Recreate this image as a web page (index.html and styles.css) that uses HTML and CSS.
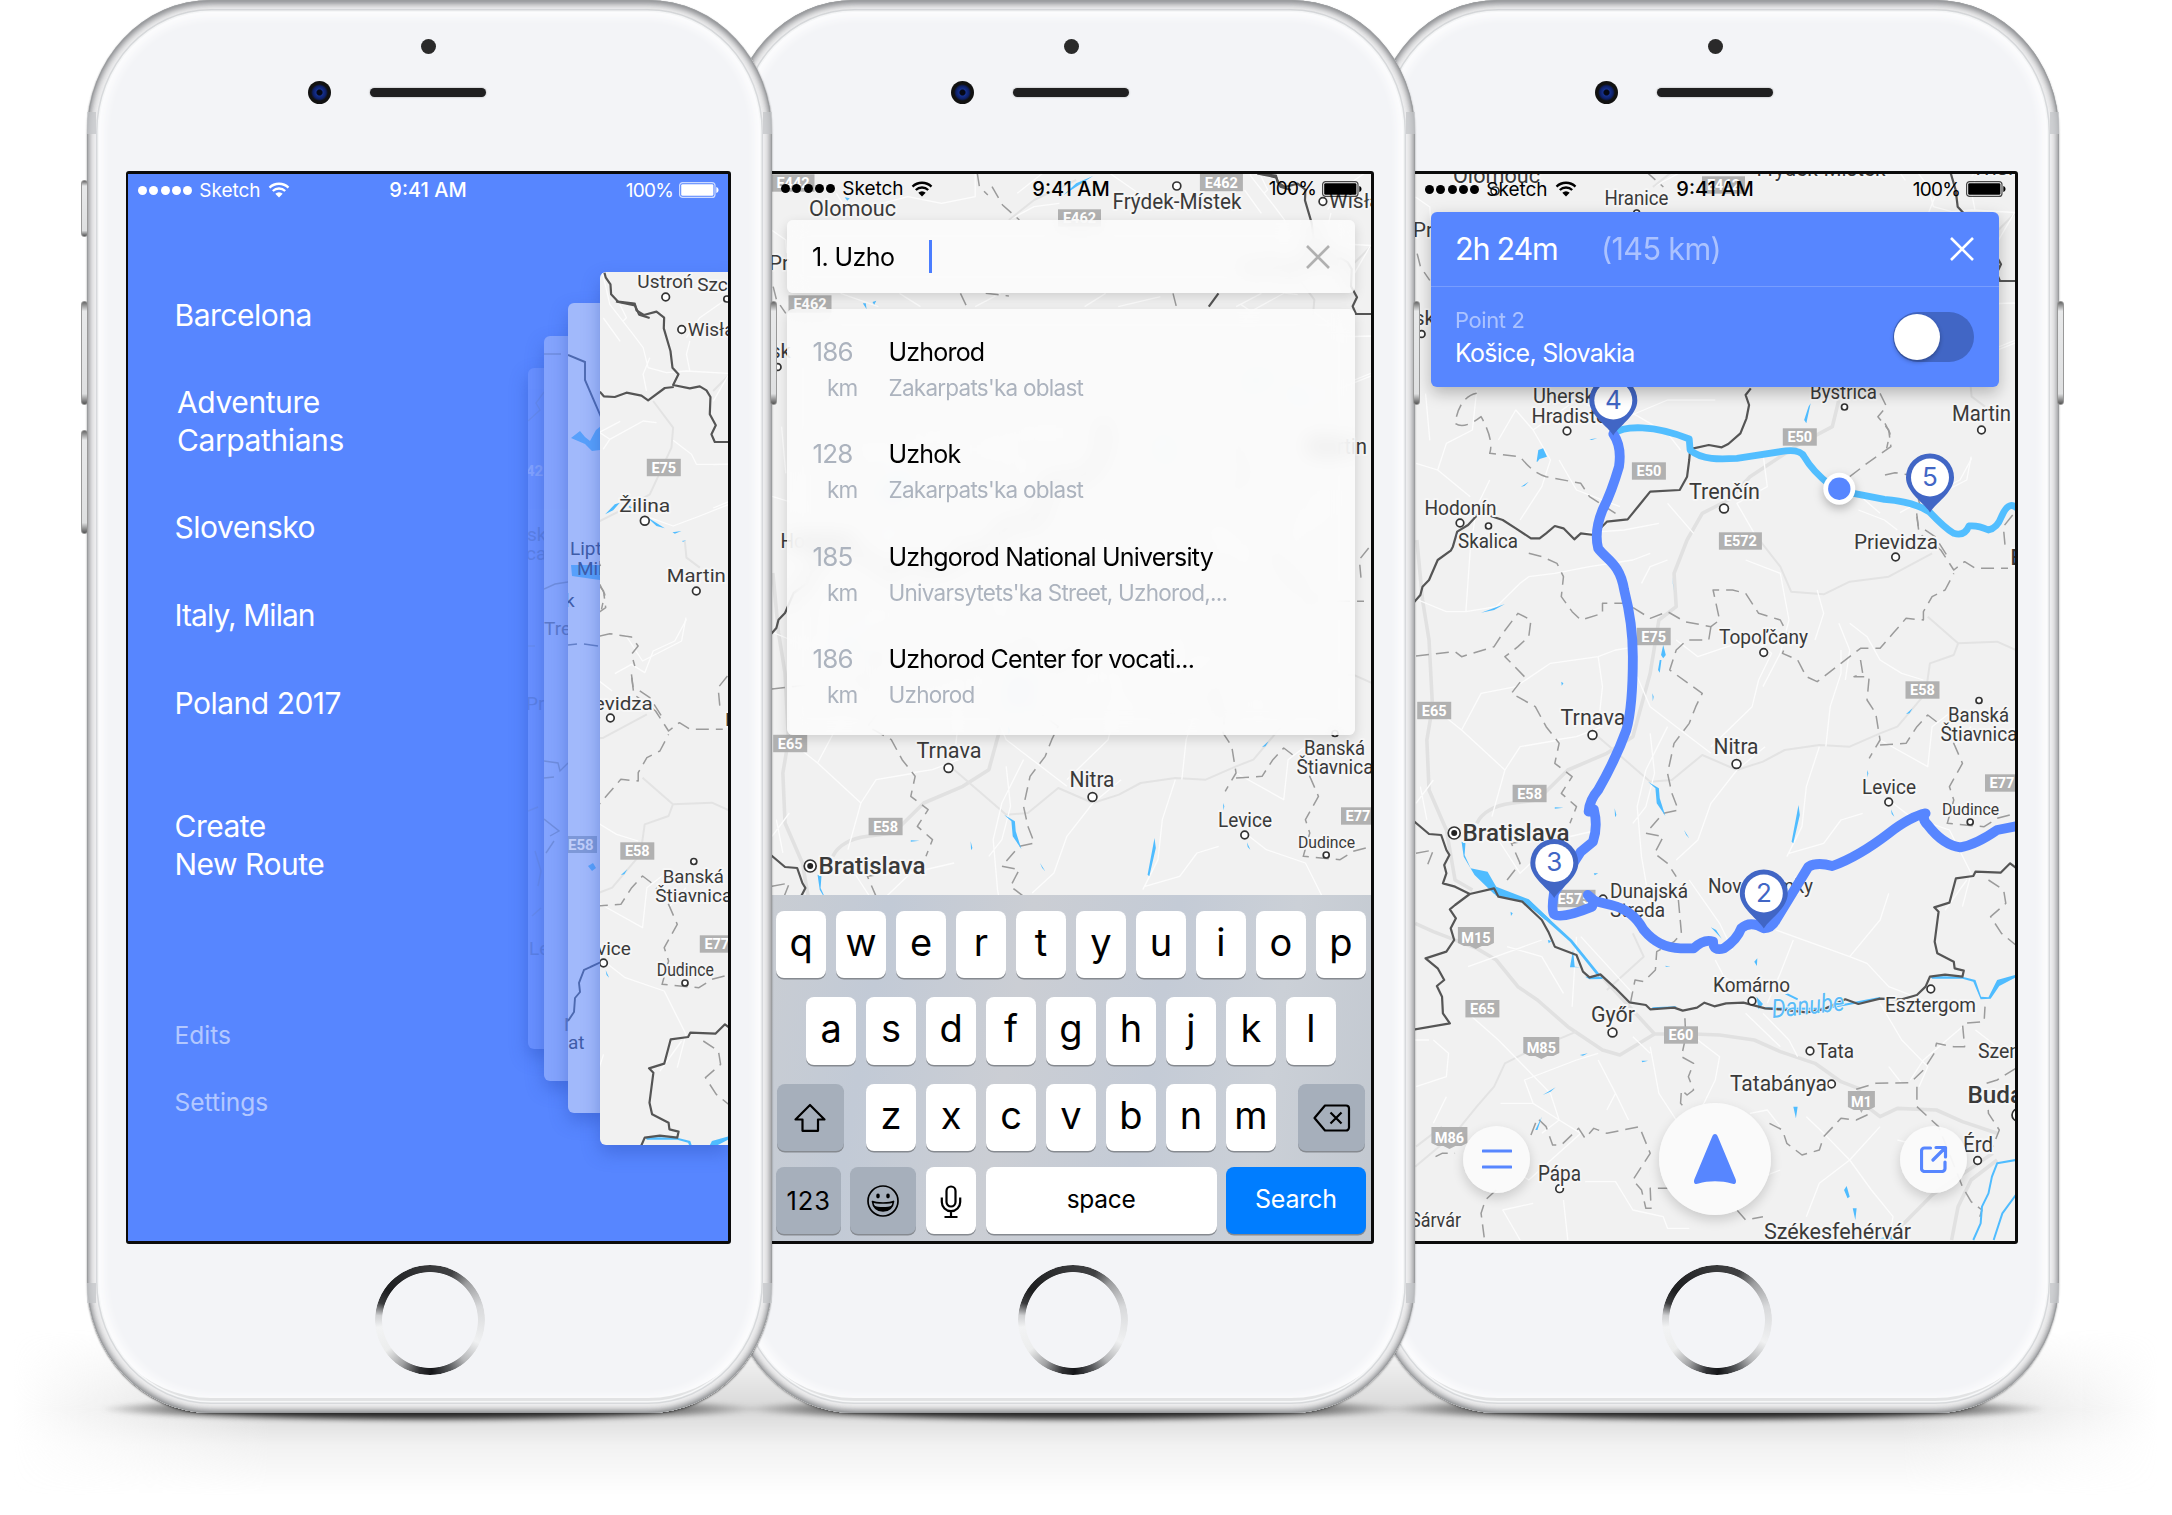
FILE: index.html
```html
<!DOCTYPE html>
<html lang="en">
<head>
<meta charset="utf-8">
<title>Route planner</title>
<link rel="stylesheet" href="styles.css">
</head>
<body>
<svg class="defs" aria-hidden="true">
  <defs>
    <symbol id="wifi" viewBox="0 0 22 16">
      <path d="M1.5 5.6a13.6 13.6 0 0 1 19 0M4.8 9a8.9 8.9 0 0 1 12.4 0" fill="none" stroke="currentColor" stroke-width="2.3"/>
      <path d="M11 15.6 7.3 11.7a5.3 5.3 0 0 1 7.4 0z" fill="currentColor"/>
    </symbol>
    <symbol id="battery" viewBox="0 0 40 16">
      <rect x=".6" y=".6" width="35.4" height="14.8" rx="3" fill="none" stroke="currentColor" stroke-width="1.2" opacity=".7"/>
      <rect x="2.2" y="2.2" width="32.2" height="11.6" rx="1.4" fill="currentColor"/>
      <path d="M37.3 5v6c1.6-.6 2.2-1.6 2.2-3s-.6-2.400-2.200-3z" fill="currentColor"/>
    </symbol>
    <g id="pin">
      <path d="M0 59C-5 50-24 39-24 24a24 24 0 0 1 48 0C24 39 5 50 0 59z" fill="#4166c5"/>
      <circle cy="24" r="19" fill="#fff"/>
    </g>
    <g id="terrain">
      <g transform="translate(-25 540) scale(.43367 .33333)">
        <path class="road-main" d="M62 0 75 180 90 300 98 500 85 600 90 750 130 870 150 1020 190 1050M200 850Q220 800 280 790L340 780 410 690 500 640 560 590 600 400 620 240 660 200 655 100 685 0 720-80 780-120 830-190 900-250 940-285 1020-340 1035-420"/>
        <path class="road-mid" d="M480 590 560 680 600 725 650 720 720 645 800 690 860 665 910 630 990 615 1060 620 1130 580 1170 560 1235 460 1245 370 1300 345 1310 310 1400 305 1443 330M840-20 900 80 925 155 1000 163 1060 125 1150 110 1250 40M1240 230 1310 310"/>
        <path class="road" d="M65 180 130 215 175 215 185 30 200-100 230-180M175 215 245 200 300 130 320 110 380 100 460 80 560 60 600 40M98 500 165 570 265 690 235 830M165 570 210 460 290 440 370 370 480 350 520 330 570 320M380 600 430 590 490 560M265 690 300 620 390 600M570 410 600 500 660 560 740 640M660 300 710 350 800 310 850 310 880 340 850 420 835 500 740 620M865 620 800 690 740 790 710 900 660 960M990 620 960 740 950 860 915 950M1005 620 1015 500 1040 400 1040 330M1060 250 1100 290 1130 360 1180 400 1230 420M1130 600 1240 680 1250 560 1290 520M1160 790 1200 830 1290 870 1340 1000 1320 1100M1090 820 1040 840 1000 910 920 940M600 580 610 700 590 800 560 850M640 560 590 690 570 800 580 950 600 1100M60 790 100 720M85 840 70 740M250 900 300 1000 380 900 480 870M1300 620 1340 560M480 350 490 440 480 560M820 60 900 100 920 240M920 240 900 340 860 440M640 60 600 80 580 130M985 150 1000 220 980 300M1035 250 1060 330 1050 420"/>
        <path class="road" d="M185-130 110-210 60-230M110-210 130-290 190-330 200-450M250-300 290-390 330-330 370-240 350-160 300-60M330-330 430-420 530-360 640-420 750-420M560-380 640-320 670-270M840-20 800-110 870-160 860-260M1200-200 1240-120 1330-180 1340-250M1080-90 1140-60 1170-30M430-20 540-30 620-50M640-110 700-20M1060-160 1130-80M390-240 430-150 530-100"/>
        <path class="region" d="M200-440Q160-430 150-350 170-330 210-370 240-300 230-260L300-250Q330-200 360-190L440-170 460-130 520-80M1130-440 1145-400 1125-370 1150-330 1155-280 1100-230 1060-190M1215-70 1220-20 1270 30 1300 90 1325 65 1350 85 1425 85M320 40 350 50 385 70 400 110 395 170 420 215 440 240 490 220 490 190 545 190 600 235 640 215 680 245 740 260 760 240 745 150 790 150 820 160 850 220 900 240 920 290 905 340 940 360 960 410 985 425 1060 350 1085 325 1130 325 1160 280 1190 235 1230 240 1230 215 1250 170 1280 150 1300 100M740 260 735 300 685 300 660 330 645 390 720 460 705 500 690 550 655 610 640 700 650 760 665 810 630 820 590 880 630 890 610 940 640 970 660 1010M60 348 150 335 165 350 240 320 260 280 295 220 325 240 320 290 295 320 265 350 310 410 280 460 335 500 360 560 390 610 380 670 420 710 395 760 430 800 415 850M1085 360 1090 400 1070 410 1105 410 1100 480 1120 520 1130 600 1105 655M1130 615 1190 610 1215 560 1240 525 1265 550 1300 610 1320 670 1290 740 1300 780 1285 850 1370 860 1400 835 1443 820M60 940 100 930 85 980M270 1020 300 970 280 910 330 900"/>
        <path class="water" d="M595 725 620 745 622 775 635 828 615 790 612 745zM625 345 630 315 636 345 630 355zM622 360 626 360 622 398 618 390zM605 460 608 470 606 484zM650 110 656 160 652 130zM210 218 265 192 240 210zM942 795 945 825 930 910 926 905zM1100 690 1103 700 1101 712zM1155 808 1163 830 1157 822zM678 870 690 895 683 885zM1190 522 1205 505 1198 520zM518 805 522 825 519 832zM380 802 400 803 380 806zM165 905 174 910 172 945 186 985 225 995 245 1040 320 1078 370 1140 358 1140 305 1080 240 1062 195 1005 170 950z"/>
        <path class="water" d="M338-235 342-270 353-275 362-250 345-243 340-235zM302-160 320-175 310-162zM395 425 400 430 396 437zM470 1000 480 1000 472 1006zM955-360 965-400 970-410 960-350zM460-302 478-305 465-300z"/>
      </g>
      <g transform="translate(-25 880) scale(.43367 .33333)">
        <path class="road-main" d="M58 130 100 155 200 205 245 240 295 320 340 360 410 440 490 510 530 525 610 462 700 462 760 465 840 480 900 515 980 550 1040 605 1080 625 1090 670 1130 710 1170 685 1260 690 1320 725 1400 760M485 285 610 462M1400 840 1340 900 1310 980 1295 1080M1390 820 1250 945 1170 1050"/>
        <path class="road-mid" d="M58 860 150 760 200 680 240 620 265 550 310 520 430 455M60 800 120 740M560 160 585 230 500 330"/>
        <path class="road" d="M100 480 135 520 130 590 60 620M180 400 250 480 370 640 390 720 350 760M255 670 330 670 390 720 440 760M330 670 310 600 430 540 480 520M600 520 560 470M480 540 520 640 550 720M520 640 500 690M700 470 760 530 750 600 720 680M600 500 620 640 660 720M820 400 900 500M860 400 920 480 940 530M1130 370 1180 480 1240 560 1220 620M1200 600 1230 540 1320 440M890 150 1060 230 1100 250 1150 320 1230 360M1060 230 1130 120 1150 40M930 180 900 280 870 370M690 0 760 130 790 210M750 240 770 290 840 350M430 170 420 380M560 340 440 170M270 200 350 230 400 340M130 650 100 730M960 710 1000 760 1060 840 990 910 960 1010M1060 840 1110 930 1160 1010 1150 1080M1060 840 1130 740M1170 780 1230 800M450 905 520 905 560 990 630 1010 640 1045 690 1045M300 1080 260 990 330 970M400 960 410 1080M250 840 320 900 440 760M830 700 870 690 900 740M840 900 900 870M58 480 90 480M1330 0 1280 90M1350 450 1400 500M180 260 350 180M1150 560 1180 610"/>
        <path class="region" d="M665 60 672 160 655 185 615 215 612 270 585 305 565 300 555 365M680 415 682 470 672 530 700 550 688 590 700 630 685 645 672 630 670 670 685 690M325 765 340 715 360 740 375 795 395 795 435 745 450 775 470 745 500 760 575 740 600 820 580 860 560 900 580 930 590 985 602 985 600 925 640 925M245 930 220 960 210 1000 218 1080M875 730 905 750 915 790 950 825 990 810 1000 770 1040 715 1075 720 1100 705 1110 720M1075 628 1120 610 1200 608 1230 570 1255 520 1260 490 1300 500 1325 500 1320 430 1370 425 1372 380M1215 620 1215 680 1265 740 1320 920 1340 965 1365 990 1360 1010M1380 0 1415 30 1420 70 1385 110 1410 160 1443 195M1443 565 1400 600 1375 610 1380 700 1405 750 1390 800M800 990 820 1020 860 1010M105 830 120 820 150 820"/>
        <path class="water" d="M225 0 250 40 320 60 420 180 485 285 480 290 415 185 340 98 300 62 245 48 215 0zM1245 288 1320 290 1350 300 1363 350 1380 352 1400 300 1443 284 1443 292 1405 318 1385 356 1362 358 1345 305 1320 296 1250 296zM840 245 847 235 846 258zM845 350 860 372 850 388zM930 680 940 680 936 715zM1047 930 1053 918 1060 950 1055 955zM1067 985 1076 985 1073 1020zM352 645 382 622 370 635zM335 750 350 710 340 750zM580 542 595 542 582 547zM438 525 456 520 445 527zM278 95 283 100 279 108zM364 180 372 183 366 190zM422 210 426 260 440 262 415 262zM450 290 490 290 490 297 460 298zM635 257 647 260 636 260zM740 142 765 176 752 150zM1130 1075 1160 1065 1190 1050 1165 1080z"/>
        <path class="river" d="M1443 840 1400 850 1388 890 1380 940 1365 980 1362 1030 1345 1080M1443 945 1412 1000 1392 1080M865 385 1000 386 1130 354M605 385 660 382M912 340 940 358"/>
      </g>
      <g transform="translate(370 80) scale(.33333)">
        <path class="road" d="M360 190 380 230 370 240M300 60 330 190 400 280 430 320 445 380 500 395 560 390 700 398M440 450 430 400 450 350M570 390 560 340 570 300M560 290 600 230 700 160M300 575 330 595 310 625M330 595 430 540 470 545M520 598 575 640 590 670 700 670M450 830 520 855 600 825 700 785M345 1298 395 1270 435 1295 460 1230 525 1200 560 1135"/>
        <path class="road-mid" d="M640 450 700 390M460 480 520 560 515 620 450 760 380 800 300 840M555 900 560 950 600 980"/>
        <path class="water" d="M316 820 345 790 360 785 340 808zM380 788 398 800 392 804zM438 826 495 862 470 855zM518 874 545 870 525 878zM546 900 560 898 550 902z"/>
        <path class="region" d="M300 1030 315 1060 305 1105M300 1185 330 1178 395 1188 415 1215 395 1240 405 1275M395 1300 400 1340M420 1350 450 1370 485 1425M683 1305 655 1340 660 1395"/>
        <path class="border" d="M314 95 318 110 332 130 334 160 355 182 405 188 410 208 432 222 470 212 493 230 492 262 512 330 518 380 536 400 520 432 570 442 600 436 620 448 632 468 630 520 648 553 635 580 645 603 700 603M300 452 312 466 345 468 380 455 425 464 445 478 495 441 522 438"/>
      </g>
      <g transform="translate(-31.500 107) scale(.42088 .33333)">
        <path class="road" d="M76 270 110 300 112 340M230 160 250 200 330 230M340 190 400 170 480 190 560 170 560 100M640 240 700 200 760 190M720 100 660 160M880 100 960 170M1200 150 1240 220M240 460 330 500M380 460 430 500M820 500 870 460M1180 500 1240 460M1000 470 900 500M100 860 110 1000M1461 400 1500 315M1461 720 1500 700M1461 590 1500 588M560 500 620 460"/>
        <path class="road-mid" d="M640 240 700 180 800 120"/>
        <path class="region" d="M565 100 570 140 590 165M600 140 625 195 665 240M525 460 540 500M585 460 640 468M1030 460 1040 510M80 440 88 480 110 520"/>
        <path class="water" d="M770 165 840 108 800 130zM250 172 262 175 256 182zM293 490 300 490 302 508zM316 486 325 482 320 494z"/>
        <path class="border" d="M1230 100 1275 112 1285 140 1310 150M1138 460 1115 500"/>
      </g>
      <g transform="translate(-25 540) scale(.43367 .33333)">
        <path class="border" d="M832-455 820-435 828-405 822-365 808-320 780-288 765-278 735-285 700-275 692-270 690-240 685-190 668-150 600-145 575-105 548-62 500-55 470-15 440-20 425-2 400-35 380-42 360-20 345-5 325-5 290-35 260-60 225-75 205-80 180-45 155-25 145 20 140 32 110 60 90 120 75 140 70 165 50 195M50 838 90 882 118 885 130 930 137 945 125 975 130 1000 122 1030 150 1040 184 1062 150 1095 138 1108 152 1135 140 1165 148 1200 130 1235 82 1255 110 1285 125 1320 108 1338 120 1370 122 1420 138 1450 50 1470M184 1062 240 1045 250 1070 305 1085 350 1140 365 1175 380 1220 430 1245 445 1295 460 1312 485 1303 520 1345 552 1387 590 1395 600 1408 655 1403 675 1412 708 1403 725 1388 748 1399 775 1390 815 1388 865 1405 900 1408 960 1417 1000 1408 1050 1378 1080 1392 1130 1376 1180 1378 1215 1365 1235 1340 1245 1310 1280 1304 1320 1310 1323 1292 1302 1285 1300 1265 1262 1240 1256 1205 1265 1115 1255 1102 1290 1088 1305 1015 1345 1008 1350 995 1408 998 1430 970 1450 990"/>
      </g>
    </g>
  </defs>
</svg>

<main class="stage">
  <section class="phone phone-menu">
    <i class="side left mute"></i><i class="side left up"></i><i class="side left down"></i><i class="side right"></i>
    <header class="bezel"><i class="sensor"></i><div class="ear"><i class="camera"></i><i class="speaker"></i></div></header>
    <div class="screen blue">
      <div class="status light">
        <span class="carrier"><span class="dots"><i></i><i></i><i></i><i></i><i></i></span>Sketch<svg class="wifi"><use href="#wifi"/></svg></span>
        <b>9:41 AM</b>
        <span class="power">100%<svg class="batt"><use href="#battery"/></svg></span>
      </div>
      <div class="menu-body">
        <nav class="routes">
          <a>Barcelona</a>
          <a class="inset">Adventure<br>Carpathians</a>
          <a>Slovensko</a>
          <a class="tight">Italy, Milan</a>
          <a>Poland 2017</a>
          <a class="create">Create<br>New Route</a>
          <a class="minor">Edits</a>
          <a class="minor">Settings</a>
        </nav>
        <div class="deck">
          <div class="card c4"><svg viewBox="528 367 16 681">
            <path class="ghost" d="M528 420 540 409 536 402 544 391M528 645h7M528 810l10-4M535 850l6 20-3 15M532 915l9-8"/>
            <text x="526" y="475" class="gb">42</text><text x="527" y="540">ska</text><text x="526" y="559">ca</text><text x="526" y="709">Pri</text><text x="529" y="954">Le</text>
          </svg></div>
          <div class="card c3"><svg viewBox="544 335 24 745">
            <path class="ghost" d="M544 353h17M544 588 555 583 568 581M544 760 558 762 560 770 568 762M544 818 559 830 550 835M546 852 554 840M544 777 554 776"/>
            <text x="544" y="634">Tre</text><text x="564" y="1030">N</text>
          </svg></div>
          <div class="card c2"><svg viewBox="568 303 32 810">
            <path class="ghost dark" d="M568 355 585 362V380L601 417M568 1021 574 1012 575 998 580 992 579 983 584 970 601 962"/>
            <path class="ghost" d="M568 645 577 644M584 644 598 646"/>
            <path fill="#57a0fb" d="M571 438 580 431 585 437 590 441 596 430 601 426V450L592 451 585 444zM571 565h29v15l-28-4zM588 866l5-3 3 5-4 3z"/>
            <rect x="566" y="836" width="31" height="17" fill="#7d98d8"/>
            <text x="568" y="850" class="gb">E58</text><text x="570" y="555">Lipto</text><text x="577" y="575">Mik</text><text x="565" y="607">k</text><text x="568" y="1049">at</text>
          </svg></div>
          <div class="card c1"><svg class="map" data-screen="1" viewBox="470.200 111 128 873"><use href="#terrain"/></svg></div>
        </div>
      </div>
    </div>
    <footer class="chin"><i class="home"></i></footer>
  </section>

  <section class="phone phone-search">
    <i class="side left mute"></i><i class="side left up"></i><i class="side left down"></i><i class="side right"></i>
    <header class="bezel"><i class="sensor"></i><div class="ear"><i class="camera"></i><i class="speaker"></i></div></header>
    <div class="screen">
      <svg class="map backdrop" data-screen="2" viewBox="0 141 600 1067"><use href="#terrain"/></svg>
      <div class="overlay">
        <div class="status">
          <span class="carrier"><span class="dots"><i></i><i></i><i></i><i></i><i></i></span>Sketch<svg class="wifi"><use href="#wifi"/></svg></span>
          <b>9:41 AM</b>
          <span class="power">100%<svg class="batt"><use href="#battery"/></svg></span>
        </div>
        <div class="field"><span>1. Uzho</span><i class="caret"></i><svg class="close" viewBox="0 0 24 24"><path d="M1 1 23 23M23 1 1 23"/></svg></div>
        <ul class="results">
          <li><div class="dist"><b>186</b><small>km</small></div><div><b>Uzhorod</b><small>Zakarpats'ka oblast</small></div></li>
          <li><div class="dist"><b>128</b><small>km</small></div><div><b>Uzhok</b><small>Zakarpats'ka oblast</small></div></li>
          <li><div class="dist"><b>185</b><small>km</small></div><div><b>Uzhgorod National University</b><small>Univarsytets'ka Street, Uzhorod,...</small></div></li>
          <li><div class="dist"><b>186</b><small>km</small></div><div><b>Uzhorod Center for vocati...</b><small>Uzhorod</small></div></li>
        </ul>
        <div class="keyboard">
          <div class="keys"><i>q</i><i>w</i><i>e</i><i>r</i><i>t</i><i>y</i><i>u</i><i>i</i><i>o</i><i>p</i></div>
          <div class="keys"><i>a</i><i>s</i><i>d</i><i>f</i><i>g</i><i>h</i><i>j</i><i>k</i><i>l</i></div>
          <div class="keys third">
            <i class="fn shift"><svg width="34" height="30" viewBox="0 0 34 30"><path d="M17 2 31.500 16.500H25V27.800H9.500V16.500H2.500z"/></svg></i>
            <i>z</i><i>x</i><i>c</i><i>v</i><i>b</i><i>n</i><i>m</i>
            <i class="fn back"><svg width="38" height="28" viewBox="0 0 38 28"><path d="M12 1.500H33a3 3 0 0 1 3 3V23.500a3 3 0 0 1-3 3H12L1.500 14zM17.500 8.500 28.500 19.500M28.500 8.500 17.500 19.500"/></svg></i>
          </div>
          <div class="keys bottom">
            <i class="fn num">123</i>
            <i class="fn emoji"><svg width="34" height="34" viewBox="0 0 34 34"><circle cx="17" cy="17" r="15"/><ellipse class="ink" cx="12" cy="12" rx="1.800" ry="2.400"/><ellipse class="ink" cx="22" cy="12" rx="1.800" ry="2.400"/><path d="M6.500 17.500C10 19.500 24 19.500 27.500 17.500 27 23 23 27 17 27S7 23 6.500 17.500z"/><path class="ink" d="M8 21.500C12 23.500 22 23.500 26 21.500 24.500 25.500 21 27 17 27S9.500 25.500 8 21.500z"/></svg></i>
            <i class="mic"><svg width="22" height="34" viewBox="0 0 22 34"><rect x="6.500" y="1.500" width="9" height="20" rx="4.500"/><path d="M1.800 12.500V17a9.200 9.200 0 0 0 18.400 0V12.500M11 26V32M4.500 32H17.500"/></svg></i>
            <i class="space">space</i><i class="go">Search</i>
          </div>
        </div>
      </div>
    </div>
    <footer class="chin"><i class="home"></i></footer>
  </section>

  <section class="phone phone-route">
    <i class="side left mute"></i><i class="side left up"></i><i class="side left down"></i><i class="side right"></i>
    <header class="bezel"><i class="sensor"></i><div class="ear"><i class="camera"></i><i class="speaker"></i></div></header>
    <div class="screen">
      <svg class="map backdrop" data-screen="3" viewBox="0 174 600 1067">
        <use href="#terrain"/>
        <g class="top-layer">
          <g transform="translate(-25 540) scale(.43367 .33333)">
            <path class="leg next" d="M515-318C540-345 610-345 690-303L692-270C720-240 760-242 800-245L900-265Q945-275 955-250 975-205 1015-165L1036-154 1060-142 1140-122Q1210-115 1245-83 1280-35 1300-20 1325-10 1335-42 1355-45 1380-30 1400-35 1410-70 1428-125 1450-90"/>
            <path class="leg" d="M515-318Q535-280 528-220 510-140 490-90 470-25 480 25C500 60 530 70 540 150Q560 250 560 350 560 500 545 570 520 660 480 750 460 780 458 815L470 808Q480 860 468 905L440 935 378 1060Q372 1110 378 1122 392 1140 466 1100L470 1085 456 1065 472 1083 510 1095Q560 1110 585 1170 620 1225 670 1225L700 1225Q725 1195 745 1205 745 1235 770 1225 800 1200 810 1165 830 1140 862 1165 880 1165 890 1140L965 980Q985 965 1020 978 1080 950 1150 880 1200 830 1235 820 1225 835 1240 855 1275 915 1315 922 1350 915 1400 870L1450 857"/>
          </g>
          <g class="here"><circle cx="424.300" cy="488.700" r="16" fill="#fff"/><circle cx="424.300" cy="488.700" r="11.200" fill="#5786ff"/></g>
          <g class="pins">
            <g transform="translate(198.300 376.500)"><use href="#pin"/><text y="32">4</text></g>
            <g transform="translate(515 453.500)"><use href="#pin"/><text y="32">5</text></g>
            <g transform="translate(139.300 839)"><use href="#pin"/><text y="32">3</text></g>
            <g transform="translate(348.800 869.500)"><use href="#pin"/><text y="32">2</text></g>
          </g>
        </g>
      </svg>
      <div class="overlay">
        <div class="status">
          <span class="carrier"><span class="dots"><i></i><i></i><i></i><i></i><i></i></span>Sketch<svg class="wifi"><use href="#wifi"/></svg></span>
          <b>9:41 AM</b>
          <span class="power">100%<svg class="batt"><use href="#battery"/></svg></span>
        </div>
        <div class="trip">
          <div class="trip-head"><b>2h 24m</b><span>(145 km)</span><svg class="close" viewBox="0 0 24 24"><path d="M1 1 23 23M23 1 1 23"/></svg></div>
          <div class="trip-point"><p><small>Point 2</small>Košice, Slovakia</p><span class="toggle"><i></i></span></div>
        </div>
        <div class="actions">
          <span class="round"><svg width="30" height="20" viewBox="0 0 30 20"><path d="M1 2H29M1 18H29"/></svg></span>
          <span class="round big"><svg width="44" height="52" viewBox="0 0 44 52"><path class="arrow" d="M22 1C20.500 1 19.800 2 19 4L1.500 46C0 50 2 52 5.500 50.500 15 47.500 29 47.500 38.500 50.500 42 52 44 50 42.500 46L25 4C24.200 2 23.500 1 22 1z"/></svg></span>
          <span class="round"><svg width="28" height="28" viewBox="0 0 28 28"><path d="M10.500 3H4.500a3 3 0 0 0-3 3V23.500a3 3 0 0 0 3 3H22a3 3 0 0 0 3-3V17M16 2.500H25.500V12M25 3 13 15"/></svg></span>
        </div>
      </div>
    </div>
    <footer class="chin"><i class="home"></i></footer>
  </section>
</main>
<script src="map.js"></script>
</body>
</html>
```
FILE: map.js
```js
const NS = 'http://www.w3.org/2000/svg';

// screens, x, baseline, font size, width, name, options
const towns = [
  ['1', 507.5, 127, 20, 56, 'Ustroń'],
  ['1', 567.5, 130, 18, 0, 'Szczyrk'],
  ['123', 558, 175, 19.5, 0, 'Wisła'],
  ['1', 489.5, 350.7, 20.5, 51, 'Žilina'],
  ['23', 38, 182.5, 20, 87, 'Olomouc'],
  ['23', 341.5, 176, 20, 129, 'Frýdek-Místek'],
  ['3', 189.5, 205, 19, 64, 'Hranice'],
  ['23', -2, 236.7, 19, 0, 'Pr'],
  ['23', -1, 325, 19, 0, 'sk'],
  ['3', 118, 403, 18.5, 0, 'Uherské'],
  ['3', 116.5, 422.7, 18.5, 0, 'Hradiste'],
  ['3', 395, 399, 18.5, 67, 'Bystrica'],
  ['123', 537, 421, 20, 59, 'Martin'],
  ['3', 274, 499, 20, 71, 'Trenčín'],
  ['23', 9.5, 515, 19, 72, 'Hodonín'],
  ['3', 43, 547.5, 18.5, 60, 'Skalica'],
  ['13', 439, 548.5, 19.5, 84, 'Prievidza'],
  ['3', 304, 644, 19, 89, 'Topoľčany'],
  ['23', 145.5, 725, 20.5, 65, 'Trnava'],
  ['23', 298.5, 753.7, 20.5, 45, 'Nitra'],
  ['123', 447, 794, 19, 54, 'Levice'],
  ['123', 533, 721.7, 19, 61, 'Banská'],
  ['123', 525.5, 741, 19, 77, 'Štiavnica'],
  ['123', 527, 815, 16, 57, 'Dudince'],
  ['23', 47.5, 840.7, 22, 107, 'Bratislava', 'strong'],
  ['3', 195, 897.7, 18.5, 78, 'Dunajská'],
  ['3', 195, 916.7, 18.5, 55, 'Streda'],
  ['3', 293, 893.3, 18.5, 105, 'Nové Zámky'],
  ['3', 298, 992, 18.5, 77, 'Komárno'],
  ['3', 470, 1011.7, 18.5, 91, 'Esztergom'],
  ['3', 176, 1022, 20.5, 44, 'Győr'],
  ['3', 402, 1058, 19, 37, 'Tata'],
  ['3', 315, 1090.7, 20, 97, 'Tatabánya'],
  ['3', 563, 1058, 18, 0, 'Szentendre'],
  ['3', 552.5, 1102.7, 22.5, 0, 'Budapest', 'strong'],
  ['3', 548, 1151.7, 20, 30, 'Érd'],
  ['3', 123, 1181, 20, 43, 'Pápa'],
  ['3', -5, 1227, 19, 51, 'Sárvár'],
  ['3', 349, 1239, 20, 147, 'Székesfehérvár'],
  ['13', 595.5, 565, 20, 0, 'B', 'strong'],
  ['3', 357.5, 1018, 24, 73, 'Danube', 'river-name'],
];

// screens, x, y, radius
const dots = [
  ['1', 535.9, 136, 3.8], ['1', 597, 138, 3], ['123', 551.9, 168.5, 3.8], ['1', 515, 359.7, 4.4],
  ['2', 405.8, 153, 4], ['3', 221.7, 213, 3], ['23', 6.600, 334, 3.4], ['3', 80, 191, 4], ['3', 152, 431, 3.8],
  ['3', 429.5, 407, 3], ['13', 566.5, 430, 3.8], ['3', 309, 508.5, 4.4], ['3', 45, 523, 3.8],
  ['3', 73.5, 526, 3], ['13', 480.600, 557, 3.8], ['3', 348.7, 652.5, 3.8], ['23', 177.5, 735, 4.4],
  ['23', 321.5, 764, 4.4], ['123', 473.7, 802, 3.8], ['123', 564, 700.5, 3], ['123', 555.2, 822, 3],
  ['3', 337, 1001, 3.8], ['3', 515.8, 989, 3.8], ['3', 197.5, 1032.5, 4.4], ['3', 395, 1051, 3.8],
  ['3', 416.5, 1084, 3.8], ['3', 562.600, 1160.5, 3.8], ['3', 144.600, 1188.7, 3.8], ['23', 39.2, 833, 6], ['3', 188, 899, 3.8], ['3', 603, 1115, 6],
];

// screens, centre x, centre y, text, motorway shield
const signs = [
  ['2', 22, 150, 'E442'], ['2', 450.4, 149.5, 'E462'], ['23', 308.5, 185, 'E462'], ['2', 39, 271, 'E462'],
  ['1', 534, 306.5, 'E75'], ['3', 384.8, 437, 'E50'], ['3', 233.9, 471, 'E50'], ['3', 325.4, 541, 'E572'],
  ['3', 238.7, 636.5, 'E75'], ['23', 19.2, 710.5, 'E65'], ['13', 507.5, 690, 'E58'], ['23', 114.600, 793.5, 'E58'],
  ['123', 587, 783, 'E77'], ['3', 159, 898.5, 'E575'], ['3', 266, 1035, 'E60'], ['3', 67.4, 1008.7, 'E65'],
  ['3', 60.9, 938, 'M15', 1], ['3', 126.3, 1048, 'M85', 1], ['3', 446.4, 1102, 'M1', 1], ['3', 34.4, 1138, 'M86', 1],
];

function add(parent, tag, attrs, text) {
  const el = document.createElementNS(NS, tag);
  for (const key in attrs) el.setAttribute(key, attrs[key]);
  if (text) el.textContent = text;
  parent.appendChild(el);
}

document.querySelectorAll('.map').forEach(map => {
  const on = row => row[0].includes(map.dataset.screen);
  const layer = document.createElementNS(NS, 'g');
  map.insertBefore(layer, map.querySelector('.top-layer'));

  signs.filter(on).forEach(([, x, y, name, shield]) => {
    const w = name.length * 9 + 7;
    if (shield) {
      add(layer, 'path', { class: 'sign', d: `M${x - w / 2 - 1} ${y - 11}h${w + 2}v16l-6 3h-6l-${w / 2 - 11} 3-${w / 2 - 11}-3h-6l-6-3z` });
    } else {
      add(layer, 'rect', { class: 'sign', x: x - w / 2, y: y - 8.700, width: w, height: 17.4 });
    }
    add(layer, 'text', { class: 'sign-text', x, y: y + 5 }, name);
  });
  dots.filter(on).forEach(([, x, y, r]) => {
    add(layer, 'circle', { class: 'dot', cx: x, cy: y, r });
    if (r > 5) add(layer, 'circle', { cx: x, cy: y, r: 3, fill: '#222' });
  });
  towns.filter(on).forEach(([, x, y, size, width, name, kind]) => {
    const attrs = { class: 'town ' + (kind || ''), x, y, 'font-size': size * 1.08 };
    if (width) {
      attrs.textLength = width;
      attrs.lengthAdjust = 'spacingAndGlyphs';
    }
    if (kind === 'river-name') attrs.transform = `rotate(-6 ${x} ${y})`;
    add(layer, 'text', attrs, name);
  });
});
```
FILE: styles.css
```css
* { box-sizing: border-box; }
body { margin: 0; background: #fff; font-family: Inter, "Liberation Sans", sans-serif; overflow: hidden; }
i { font-style: normal; display: block; }
small { display: block; font-size: inherit; }
.defs { position: absolute; width: 0; height: 0; }

.stage { display: flex; padding-left: 87px; height: 1515px; width: 2172px; isolation: isolate; }

/* handset */
.phone {
  position: relative; flex: none; width: 685px; height: 1413px;
  border-radius: 124px / 132px;
  background: #f3f4f7;
  box-shadow:
    inset 0 0 0 1px #9b9d9f,
    inset 0 5px 6px -1px rgba(110, 112, 116, .5),
    inset 0 -4px 5px -1px rgba(110, 112, 116, .4),
    inset 0 0 7px 2px rgba(100, 102, 106, .62),
    inset 0 0 0 9px #f0f0f1,
    inset 0 0 0 10.500px #d9dbdd,
    inset 0 0 0 12px #f6f7f8,
    inset 0 -15px 0 0 #e2e3e4,
    inset 0 0 9px 17px #fdfdfe,
    0 1px 2px rgba(40, 40, 40, .5);
}
.phone-menu { z-index: 3; }
.phone-search { z-index: 2; margin-left: -42px; }
.phone-route { z-index: 1; margin-left: -41px; }
.phone::before {
  content: ""; position: absolute; inset: 0; pointer-events: none;
  background:
    linear-gradient(#c4c6c9, #c4c6c9) 0 112px / 9px 22px,
    linear-gradient(#c4c6c9, #c4c6c9) 100% 112px / 9px 22px,
    linear-gradient(#c4c6c9, #c4c6c9) 0 1283px / 9px 20px,
    linear-gradient(#c4c6c9, #c4c6c9) 100% 1283px / 9px 20px;
  background-repeat: no-repeat; opacity: .75;
}
/* ground shadow */
.stage::before {
  content: ""; position: absolute; z-index: -1; left: 10px; top: 1330px; width: 2152px; height: 180px;
  background: linear-gradient(90deg, transparent, #d8d8d8 12%, #d8d8d8 88%, transparent);
  -webkit-mask: linear-gradient(transparent, #000 44%, rgba(0,0,0,.35) 64%, transparent 92%);
  mask: linear-gradient(transparent, #000 44%, rgba(0,0,0,.35) 64%, transparent 92%);
}
/* dark contact line under each handset */
.stage::after {
  content: ""; position: absolute; z-index: -1; left: 0; top: 1390px; width: 2172px; height: 36px;
  background:
    radial-gradient(330px 13px at 430px 19px, #222 0, #333 60%, transparent),
    radial-gradient(330px 13px at 1073px 19px, #222 0, #333 60%, transparent),
    radial-gradient(330px 13px at 1717px 19px, #222 0, #333 60%, transparent);
  filter: blur(2px);
}
.side { position: absolute; width: 7px; height: 104px; border-radius: 3px; background: linear-gradient(#666, #e8e9ea 9%, #dfe0e1 90%, #555); border: 1px solid #999; }
.side.left { left: -6px; }
.side.right { right: -5px; top: 301px; }
.mute { top: 180px; height: 57px; }
.up { top: 301px; }
.down { top: 430px; }
.bezel { height: 171px; padding-top: 39px; }
.sensor { width: 15px; height: 15px; border-radius: 50%; background: #2a2a2a; margin-left: 333.500px; }
.ear { display: flex; align-items: center; gap: 39.500px; padding: 27px 0 0 220.500px; }
.camera { width: 23px; height: 23px; border-radius: 50%; background: radial-gradient(circle, #050815 0 15%, #15308c 22%, #0d1f66 40%, #111 52%); }
.speaker { width: 116px; height: 9px; border-radius: 5px; background: #1f1f20; box-shadow: 0 0 2px #999; }
.screen { position: relative; width: 605px; height: 1073px; margin-left: 39px; border: solid #0b0b0b; border-width: 3px 3px 3px 2px; border-radius: 3px; background: #f1f1f1; overflow: hidden; }
.blue { background: #5786ff; color: #fff; }
.chin { padding: 21px 0 0 287.500px; }
.home { width: 110px; height: 110px; border-radius: 50%; background: conic-gradient(#38393b 0, #3f4042 25deg, #9c9d9f 45deg, #d8d9db 75deg, #f0f1f2 115deg, #b5b6b8 140deg, #55575a 158deg, #141518 178deg, #303134 192deg, #a0a1a3 212deg, #eceded 235deg, #f2f3f4 262deg, #d0d1d3 275deg, #3a3b3d 289deg, #1d1e20 305deg, #38393b 360deg); -webkit-mask: radial-gradient(circle, transparent 47.500px, #000 48.300px); mask: radial-gradient(circle, transparent 47.500px, #000 48.300px); }

/* status bar */
.status { display: grid; grid-template-columns: 1fr auto 1fr; align-items: center; height: 30px; margin-bottom: 2px; padding: 0 9px 0 10px; font-size: 19px; color: #000; flex: none; }
.status.light { color: #fff; }
.phone-menu .status { height: 32px; }
.status b { font-weight: 500; font-size: 20px; letter-spacing: 0; margin-right: 1px; }
.carrier, .power { display: flex; align-items: center; letter-spacing: 0; }
.carrier { gap: 7px; }
.power { justify-content: flex-end; gap: 6px; letter-spacing: -.8px; }
.dots { display: flex; gap: 2.300px; }
.dots i { width: 9px; height: 9px; border-radius: 50%; background: currentColor; }
.wifi { width: 22px; height: 16px; }
.batt { width: 40px; height: 16px; }

/* saved routes */
.menu-body { display: flex; justify-content: space-between; height: 1033px; }
.routes { display: flex; flex-direction: column; padding: 88px 0 0 46.500px; font-size: 30px; line-height: 38px; font-weight: 375; letter-spacing: -.5px; }
.routes a { margin-bottom: 50px; }
.routes .inset { padding-left: 2.500px; margin-top: -1px; margin-bottom: 49px; letter-spacing: -.4px; }
.routes .tight { letter-spacing: -.95px; }
.routes .create { margin: 35px 0 133px; }
.routes .minor { font-size: 24.500px; opacity: .55; margin-bottom: 29px; letter-spacing: 0; }
.deck { display: flex; align-items: center; width: 200px; height: 1000px; }
.card { position: relative; flex: none; border-radius: 6px 0 0 6px; overflow: hidden; margin-right: -8px; box-shadow: 0 8px 18px rgba(40, 75, 180, .4); }
.card svg { display: block; height: 100%; }
.card text { font: 19px Roboto, sans-serif; fill: #3f5ca8; }
.card .gb { font-size: 15px; font-weight: 700; fill: #c0cefa; }
.c4 { width: 24px; height: 681px; background: #6890ff; }
.c3 { width: 32px; height: 745px; background: #84a4fd; }
.c2 { width: 40px; height: 810px; background: #a1b9fb; }
.c1 { width: 128px; height: 873px; background: #f1f1f1; margin: 0; }
.c4 svg { width: 16px; opacity: .3; }
.c3 svg { width: 24px; opacity: .6; }
.c2 svg { width: 32px; }
.c1 svg { width: 128px; }
.ghost { fill: none; stroke: #627fc8; stroke-width: 1.400; }
.ghost.dark { stroke: #4d69b0; stroke-width: 1.900; }

/* map */
.map { overflow: hidden; }
.backdrop { position: absolute; inset: 0; width: 600px; height: 1067px; }
#terrain path { vector-effect: non-scaling-stroke; fill: none; stroke-linejoin: round; }
#terrain .road { stroke: #fcfcfc; stroke-width: 1.300; }
#terrain .road-main { stroke: #e1e1e1; stroke-width: 3.600; }
#terrain .road-mid { stroke: #e3e3e3; stroke-width: 2; }
#terrain .region { stroke: #9b9b9b; stroke-width: 1.500; stroke-dasharray: 13 7; }
#terrain .border { stroke: #555; stroke-width: 2.200; }
#terrain .water { fill: #4fbcff; }
#terrain .river { stroke: #4fbcff; stroke-width: 2; }
.map .town { font-family: Roboto, sans-serif; font-weight: 400; fill: #3a3a3a; stroke: #f6f6f6; stroke-width: 4; paint-order: stroke; stroke-linejoin: round; }
.map .strong { font-weight: 500; }
.map .river-name { font-style: italic; fill: #5bbcf8; stroke-width: 1.500; }
.dot { fill: #fff; stroke: #333; stroke-width: 1.700; }
.sign { fill: #b1b1b1; }
.map .sign-text { font: 700 14.500px Roboto, sans-serif; fill: #fff; text-anchor: middle; }
.leg { fill: none; stroke: #5786ff; stroke-width: 9.800; stroke-linecap: round; stroke-linejoin: round; vector-effect: non-scaling-stroke; }
.leg.next { stroke: #52beff; stroke-width: 6.800; }
.here { filter: drop-shadow(0 4px 5px rgba(0, 0, 0, .25)); }
.pins text { font-size: 26px; fill: #4166c5; text-anchor: middle; font-weight: 400; }

/* search */
.overlay { position: relative; height: 1067px; width: 600px; display: flex; flex-direction: column; }
.phone-search .status { height: 29px; }
.field, .results { margin: 0 16px; width: 568px; background: rgba(253, 253, 253, .8); backdrop-filter: blur(10px); border-radius: 6px; box-shadow: 0 4px 12px rgba(0, 0, 0, .14); }
.field { display: flex; align-items: center; height: 73px; margin-top: 15px; padding: 0 25px; font-size: 25px; letter-spacing: -.6px; }
.caret { width: 3px; height: 33px; background: #4a7dff; margin-left: 35px; }
.close { width: 24px; height: 24px; margin-left: auto; fill: none; stroke: #b0b0b0; stroke-width: 2.600; }
.results { margin-top: 16px; height: 426px; padding: 24.500px 0 0 25.500px; list-style: none; font-size: 25px; letter-spacing: -.8px; }
.results li { display: flex; gap: 31px; height: 102.500px; }
.results b { display: block; font-weight: 400; line-height: 36px; height: 36px; }
.results small { font-size: 22.500px; font-weight: 400; color: #acb3be; line-height: 35px; letter-spacing: -.75px; }
.dist { width: 45px; text-align: right; }
.results .dist b { font-weight: 400; color: #acb3be; text-align: left; font-size: 26px; }

/* keyboard */
.keyboard { margin-top: auto; height: 346px; padding: 16px 5px 0; background: linear-gradient(100deg, #c9cdd3, #c2cad6 18%, #cbced4 40%, #c4cbd6 62%, #cbd0d7 80%, #c2c8d0); }
.keys { display: flex; justify-content: center; gap: 9.600px; margin-bottom: 19.300px; }
.keys.third { margin-bottom: 15.800px; }
.keys i { display: flex; align-items: center; justify-content: center; width: 50.400px; height: 67.200px; border-radius: 8px; background: #fff; box-shadow: 0 1.600px 0 #868a90; font-size: 38px; color: #000; padding-bottom: 6px; flex: none; }
.keys i svg { fill: none; stroke: #000; stroke-width: 2.200; stroke-linejoin: round; overflow: visible; }
.keys .ink { fill: #000; stroke: none; }
.keys i.fn { background: #a6afbb; width: 67px; padding: 0; }
.keys .shift { margin-right: 12.500px; }
.keys .back { margin-left: 12.500px; }
.keys i.num { width: 64.500px; font-size: 25.500px; letter-spacing: .9px; font-weight: 400; }
.keys i.emoji { width: 65.500px; }
.keys i.emoji svg { stroke-width: 1.700; }
.keys i.mic { padding: 2px 0 0; }
.keys i.space { width: 231px; font-size: 24.500px; letter-spacing: -.3px; padding-bottom: 4px; }
.keys i.go { width: 139.500px; font-size: 25px; letter-spacing: -.2px; color: #fff; background: #007dff; font-weight: 400; padding-bottom: 4px; }

/* trip */
.trip { margin: 6px 16px 0; width: 568px; height: 175px; background: #5786ff; color: #fff; border-radius: 6px; box-shadow: 0 6px 16px rgba(0, 0, 0, .25); }
.trip-head { display: flex; align-items: center; height: 75px; padding: 0 25px 1px 24px; border-bottom: 1.500px solid #779dff; font-size: 30.500px; letter-spacing: -1.200px; }
.trip-head b { font-weight: 400; width: 146px; }
.trip-head span { opacity: .5; font-weight: 375; letter-spacing: -.6px; }
.trip .close { stroke: #fff; }
.trip-point { display: flex; align-items: center; justify-content: space-between; height: 100px; padding: 0 25px 0 24px; font-size: 25px; letter-spacing: -.75px; font-weight: 400; }
.trip p { margin: 0; line-height: 34px; padding-top: 1px; }
.trip small { font-size: 22px; opacity: .5; line-height: 31px; letter-spacing: -.4px; }
.toggle { width: 81px; height: 50px; border-radius: 25px; background: #4166c5; padding: 2px 1px; }
.toggle i { width: 46px; height: 46px; border-radius: 50%; background: #fff; box-shadow: 0 2px 4px rgba(0, 0, 0, .3); }
.actions { display: flex; align-items: center; justify-content: space-between; margin: auto 48px 26px; }
.round { display: flex; align-items: center; justify-content: center; width: 67px; height: 67px; border-radius: 50%; background: rgba(250, 250, 250, .95); box-shadow: 0 5px 12px rgba(0, 0, 0, .16); }
.round.big { width: 112px; height: 112px; }
.round svg { fill: none; stroke: #5786ff; stroke-width: 3.200; stroke-linecap: round; stroke-linejoin: round; }
.round .arrow { fill: #5786ff; stroke: none; }
```
